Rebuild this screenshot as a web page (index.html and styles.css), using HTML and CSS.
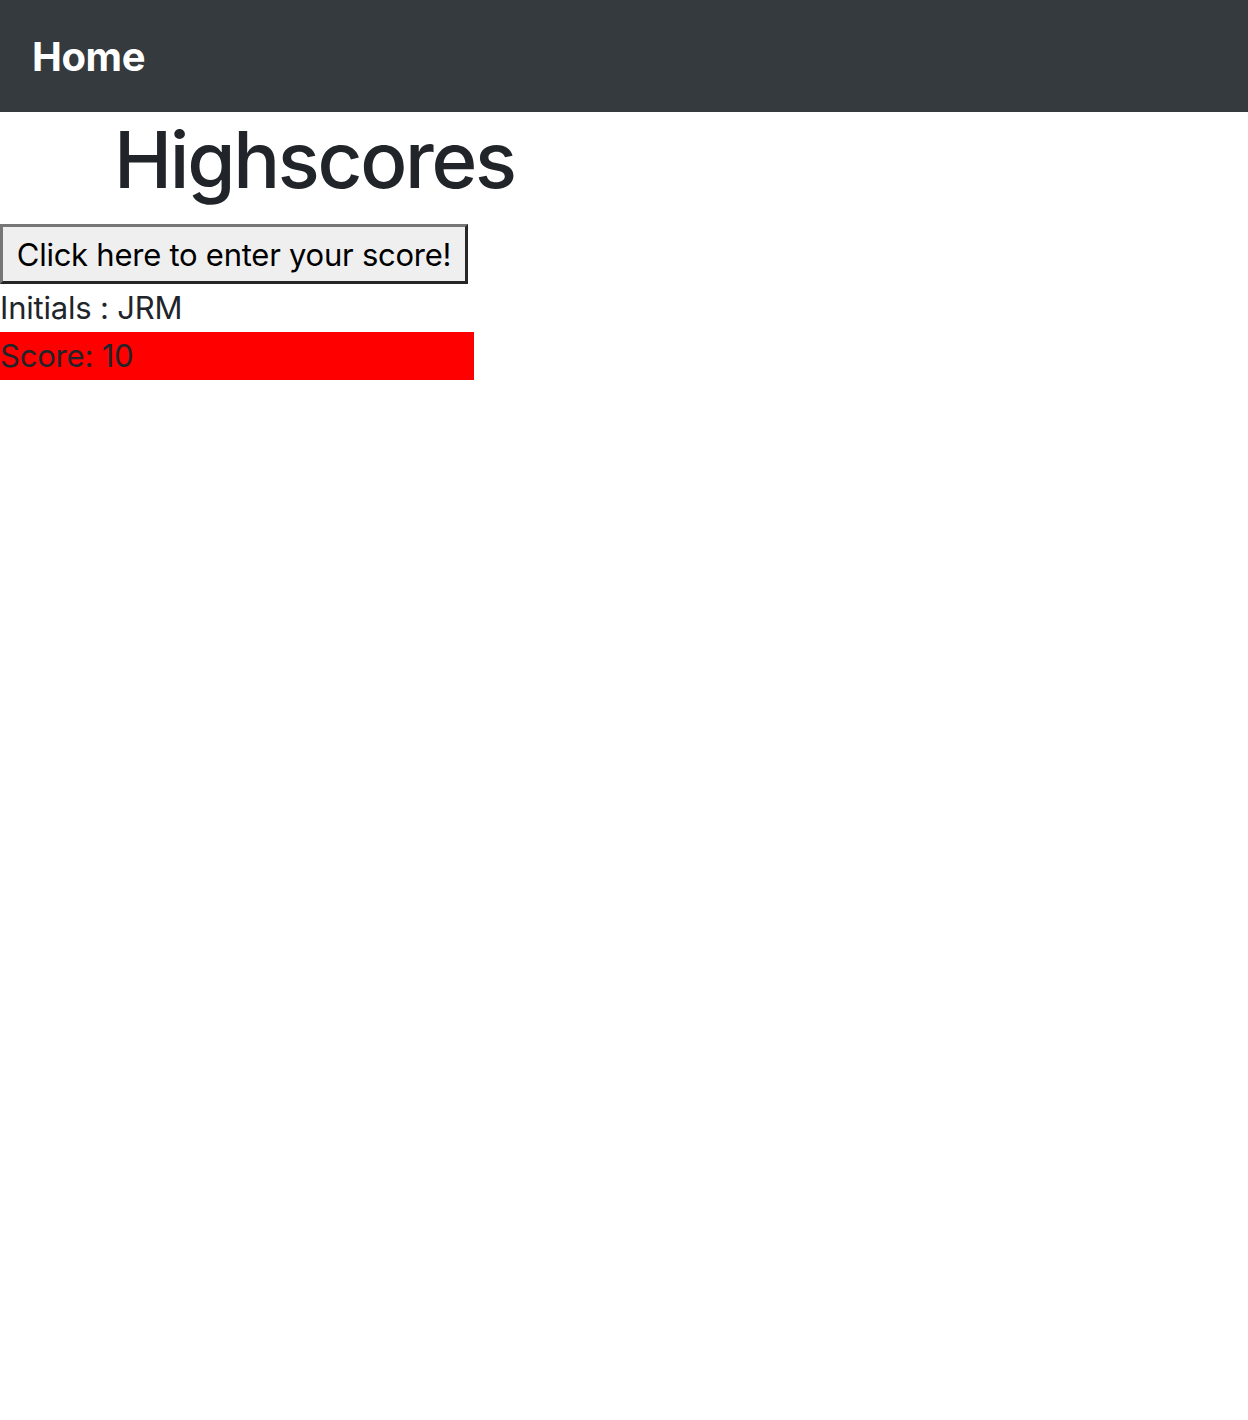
FILE: index.html
```html
<!DOCTYPE html>
<html>
<head>
<meta charset="utf-8">
<link rel="stylesheet" href="styles.css">
</head>
<body>
<nav class="navbar"><span class="brand">Home</span></nav>
<main class="content">
  <h1 class="title">Highscores</h1>
  <button class="enter-btn">Click here to enter your score!</button>
  <div class="initials">Initials : JRM</div>
  <div class="score">Score: 10</div>
</main>
</body>
</html>
```
FILE: styles.css
```css
* { box-sizing: border-box; }
body {
  margin: 0;
  font-family: Inter, "Noto Sans", sans-serif;
  font-feature-settings: "calt" 0;
  color: #212529;
  background: #fff;
}
.navbar {
  height: 112px;
  background: #343a3e;
  display: flex;
  align-items: center;
  padding-left: 32px;
}
.brand {
  color: #fff;
  font-weight: 700;
  font-size: 40px;
  letter-spacing: -0.4px;
}
.content { display: flex; flex-direction: column; align-items: flex-start; }
.title {
  margin: 0 0 16px 0;
  padding-left: 114px;
  font-size: 78px;
  font-weight: 500;
  line-height: 96px;
  letter-spacing: -2.3px;
}
.enter-btn {
  height: 60px;
  width: 468px;
  padding: 0;
  margin: 0;
  background: #efefef;
  border: 3px solid;
  border-color: #767676 #262626 #262626 #767676;
  font-family: Inter, "Noto Sans", sans-serif;
  font-feature-settings: "calt" 0;
  font-size: 31px;
  letter-spacing: -0.25px;
  color: #000;
}
.initials, .score {
  font-size: 31px;
  line-height: 48px;
  height: 48px;
  letter-spacing: -0.2px;
}
.score {
  width: 474px;
  background: #ff0000;
}
```
